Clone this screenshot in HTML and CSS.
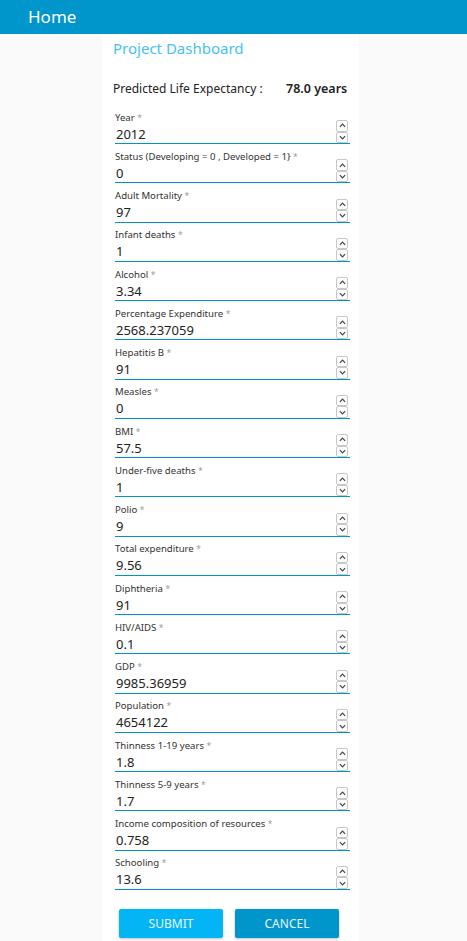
FILE: index.html
```html
<!DOCTYPE html>
<html lang="en">
<head>
<meta charset="utf-8">
<title>Home</title>
<link rel="stylesheet" href="styles.css">
</head>
<body>
<header class="topbar">Home</header>
<main class="card">
  <h1 class="title">Project Dashboard</h1>
  <div class="prediction">
    <span class="pred-label">Predicted Life Expectancy :</span>
    <span class="pred-value">78.0 years</span>
  </div>
  <form class="fields">
    <div class="field"><label class="lbl">Year <span class="req">*</span></label><div class="val">2012</div><div class="spin"><span class="sb up"><svg viewBox="0 0 8 5"><path d="M1 4 L4 1 L7 4"/></svg></span><span class="sb down"><svg viewBox="0 0 8 5"><path d="M1 1 L4 4 L7 1"/></svg></span></div></div>
    <div class="field"><label class="lbl">Status (Developing = 0 , Developed = 1} <span class="req">*</span></label><div class="val">0</div><div class="spin"><span class="sb up"><svg viewBox="0 0 8 5"><path d="M1 4 L4 1 L7 4"/></svg></span><span class="sb down"><svg viewBox="0 0 8 5"><path d="M1 1 L4 4 L7 1"/></svg></span></div></div>
    <div class="field"><label class="lbl">Adult Mortality <span class="req">*</span></label><div class="val">97</div><div class="spin"><span class="sb up"><svg viewBox="0 0 8 5"><path d="M1 4 L4 1 L7 4"/></svg></span><span class="sb down"><svg viewBox="0 0 8 5"><path d="M1 1 L4 4 L7 1"/></svg></span></div></div>
    <div class="field"><label class="lbl">Infant deaths <span class="req">*</span></label><div class="val">1</div><div class="spin"><span class="sb up"><svg viewBox="0 0 8 5"><path d="M1 4 L4 1 L7 4"/></svg></span><span class="sb down"><svg viewBox="0 0 8 5"><path d="M1 1 L4 4 L7 1"/></svg></span></div></div>
    <div class="field"><label class="lbl">Alcohol <span class="req">*</span></label><div class="val">3.34</div><div class="spin"><span class="sb up"><svg viewBox="0 0 8 5"><path d="M1 4 L4 1 L7 4"/></svg></span><span class="sb down"><svg viewBox="0 0 8 5"><path d="M1 1 L4 4 L7 1"/></svg></span></div></div>
    <div class="field"><label class="lbl">Percentage Expenditure <span class="req">*</span></label><div class="val">2568.237059</div><div class="spin"><span class="sb up"><svg viewBox="0 0 8 5"><path d="M1 4 L4 1 L7 4"/></svg></span><span class="sb down"><svg viewBox="0 0 8 5"><path d="M1 1 L4 4 L7 1"/></svg></span></div></div>
    <div class="field"><label class="lbl">Hepatitis B <span class="req">*</span></label><div class="val">91</div><div class="spin"><span class="sb up"><svg viewBox="0 0 8 5"><path d="M1 4 L4 1 L7 4"/></svg></span><span class="sb down"><svg viewBox="0 0 8 5"><path d="M1 1 L4 4 L7 1"/></svg></span></div></div>
    <div class="field"><label class="lbl">Measles <span class="req">*</span></label><div class="val">0</div><div class="spin"><span class="sb up"><svg viewBox="0 0 8 5"><path d="M1 4 L4 1 L7 4"/></svg></span><span class="sb down"><svg viewBox="0 0 8 5"><path d="M1 1 L4 4 L7 1"/></svg></span></div></div>
    <div class="field"><label class="lbl">BMI <span class="req">*</span></label><div class="val">57.5</div><div class="spin"><span class="sb up"><svg viewBox="0 0 8 5"><path d="M1 4 L4 1 L7 4"/></svg></span><span class="sb down"><svg viewBox="0 0 8 5"><path d="M1 1 L4 4 L7 1"/></svg></span></div></div>
    <div class="field"><label class="lbl">Under-five deaths <span class="req">*</span></label><div class="val">1</div><div class="spin"><span class="sb up"><svg viewBox="0 0 8 5"><path d="M1 4 L4 1 L7 4"/></svg></span><span class="sb down"><svg viewBox="0 0 8 5"><path d="M1 1 L4 4 L7 1"/></svg></span></div></div>
    <div class="field"><label class="lbl">Polio <span class="req">*</span></label><div class="val">9</div><div class="spin"><span class="sb up"><svg viewBox="0 0 8 5"><path d="M1 4 L4 1 L7 4"/></svg></span><span class="sb down"><svg viewBox="0 0 8 5"><path d="M1 1 L4 4 L7 1"/></svg></span></div></div>
    <div class="field"><label class="lbl">Total expenditure <span class="req">*</span></label><div class="val">9.56</div><div class="spin"><span class="sb up"><svg viewBox="0 0 8 5"><path d="M1 4 L4 1 L7 4"/></svg></span><span class="sb down"><svg viewBox="0 0 8 5"><path d="M1 1 L4 4 L7 1"/></svg></span></div></div>
    <div class="field"><label class="lbl">Diphtheria <span class="req">*</span></label><div class="val">91</div><div class="spin"><span class="sb up"><svg viewBox="0 0 8 5"><path d="M1 4 L4 1 L7 4"/></svg></span><span class="sb down"><svg viewBox="0 0 8 5"><path d="M1 1 L4 4 L7 1"/></svg></span></div></div>
    <div class="field"><label class="lbl">HIV/AIDS <span class="req">*</span></label><div class="val">0.1</div><div class="spin"><span class="sb up"><svg viewBox="0 0 8 5"><path d="M1 4 L4 1 L7 4"/></svg></span><span class="sb down"><svg viewBox="0 0 8 5"><path d="M1 1 L4 4 L7 1"/></svg></span></div></div>
    <div class="field"><label class="lbl">GDP <span class="req">*</span></label><div class="val">9985.36959</div><div class="spin"><span class="sb up"><svg viewBox="0 0 8 5"><path d="M1 4 L4 1 L7 4"/></svg></span><span class="sb down"><svg viewBox="0 0 8 5"><path d="M1 1 L4 4 L7 1"/></svg></span></div></div>
    <div class="field"><label class="lbl">Population <span class="req">*</span></label><div class="val">4654122</div><div class="spin"><span class="sb up"><svg viewBox="0 0 8 5"><path d="M1 4 L4 1 L7 4"/></svg></span><span class="sb down"><svg viewBox="0 0 8 5"><path d="M1 1 L4 4 L7 1"/></svg></span></div></div>
    <div class="field"><label class="lbl">Thinness 1-19 years <span class="req">*</span></label><div class="val">1.8</div><div class="spin"><span class="sb up"><svg viewBox="0 0 8 5"><path d="M1 4 L4 1 L7 4"/></svg></span><span class="sb down"><svg viewBox="0 0 8 5"><path d="M1 1 L4 4 L7 1"/></svg></span></div></div>
    <div class="field"><label class="lbl">Thinness 5-9 years <span class="req">*</span></label><div class="val">1.7</div><div class="spin"><span class="sb up"><svg viewBox="0 0 8 5"><path d="M1 4 L4 1 L7 4"/></svg></span><span class="sb down"><svg viewBox="0 0 8 5"><path d="M1 1 L4 4 L7 1"/></svg></span></div></div>
    <div class="field"><label class="lbl">Income composition of resources <span class="req">*</span></label><div class="val">0.758</div><div class="spin"><span class="sb up"><svg viewBox="0 0 8 5"><path d="M1 4 L4 1 L7 4"/></svg></span><span class="sb down"><svg viewBox="0 0 8 5"><path d="M1 1 L4 4 L7 1"/></svg></span></div></div>
    <div class="field"><label class="lbl">Schooling <span class="req">*</span></label><div class="val">13.6</div><div class="spin"><span class="sb up"><svg viewBox="0 0 8 5"><path d="M1 4 L4 1 L7 4"/></svg></span><span class="sb down"><svg viewBox="0 0 8 5"><path d="M1 1 L4 4 L7 1"/></svg></span></div></div>
    <div class="actions">
      <button type="button" class="btn btn-submit">SUBMIT</button>
      <button type="button" class="btn btn-cancel">CANCEL</button>
    </div>
  </form>
</main>
</body>
</html>
```
FILE: styles.css
```css
html, body {
  margin: 0;
  padding: 0;
}
body {
  background: #fafafa;
  font-family: "Noto Sans", "Open Sans", sans-serif;
  color: #222;
}
.topbar {
  height: 34px;
  line-height: 34px;
  background: #0096cc;
  color: #fff;
  font-size: 17px;
  padding-left: 28px;
}
.card {
  margin-left: 102px;
  width: 257px;
  min-height: calc(100vh - 34px);
  background: #fff;
  box-sizing: border-box;
  padding: 4px 9px 0 11px;
}
.title {
  margin: 0;
  font-size: 15px;
  line-height: 20px;
  font-weight: 400;
  color: #45c2f2;
}
.prediction {
  display: grid;
  grid-template-columns: 173px auto;
  margin-top: 22px;
  font-size: 12px;
  line-height: 18px;
  color: #222;
}
.pred-value {
  font-size: 12.5px;
  font-weight: 600;
}
.fields {
  margin: 6.75px 0 0 2px;
}
.field {
  display: grid;
  grid-template-columns: 1fr 12px;
  grid-template-rows: 15px 18.5px;
  column-gap: 2px;
  padding-top: 4.75px;
  padding-right: 2px;
  border-bottom: 1px solid #0093c9;
}
.lbl {
  grid-column: 1;
  grid-row: 1;
  font-size: 9.6px;
  line-height: 15px;
  color: #333;
  white-space: nowrap;
}
.req {
  color: #999;
  font-size: 8.5px;
}
.val {
  grid-column: 1;
  grid-row: 2;
  font-size: 13px;
  line-height: 18.5px;
  padding-left: 1px;
  color: #222;
}
.spin {
  grid-column: 2;
  grid-row: 1 / 3;
  align-self: end;
  display: flex;
  flex-direction: column;
  height: 23px;
}
.sb {
  flex: 1;
  border: 1px solid #c8c8c8;
  border-radius: 2px;
  background: #fdfdfd;
  display: flex;
  align-items: center;
  justify-content: center;
}
.sb svg {
  width: 7px;
  height: 5px;
}
.sb path {
  fill: none;
  stroke: #444;
  stroke-width: 1.4;
}
.actions {
  display: flex;
  gap: 12px;
  margin: 19px 0 0 4px;
}
.btn {
  width: 104px;
  height: 29px;
  border: none;
  border-radius: 2px;
  color: #e8f7fd;
  font-family: "Noto Sans", "Open Sans", sans-serif;
  font-size: 12px;
  box-shadow: 0 1px 3px rgba(0,0,0,0.25);
  padding: 0;
}
.btn-submit {
  background: #03b5f5;
}
.btn-cancel {
  background: #0096cc;
}
```
